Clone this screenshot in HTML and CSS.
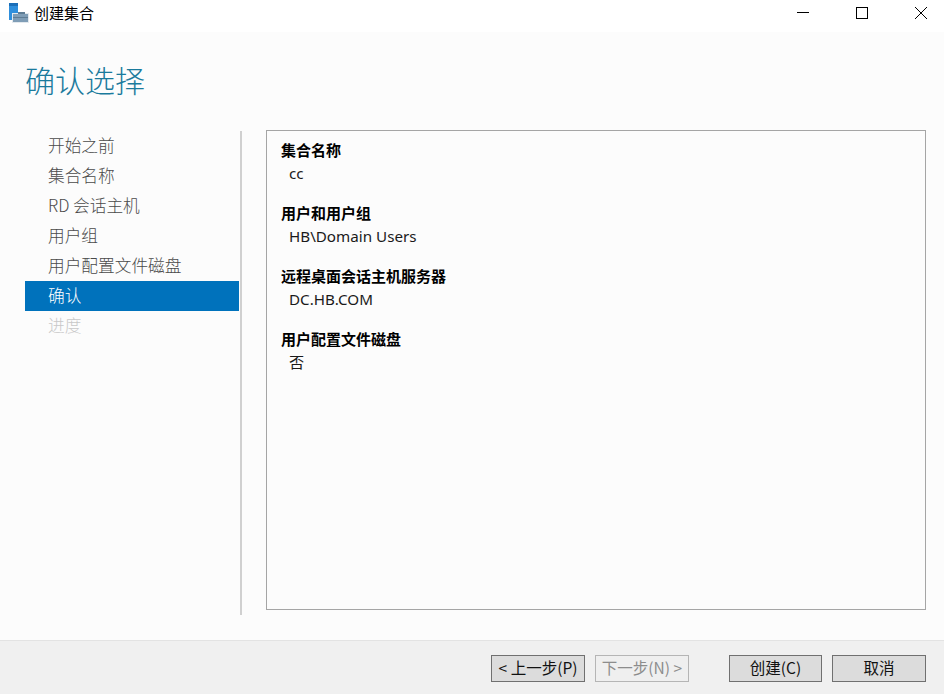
FILE: index.html
```html
<!DOCTYPE html>
<html lang="zh-CN">
<head>
<meta charset="utf-8">
<title>创建集合</title>
<link rel="stylesheet" href="styles.css">
</head>
<body>
<div class="window">
  <header class="titlebar">
    <svg class="app-icon" width="20" height="20" viewBox="0 0 20 20">
      <rect x="0" y="0" width="9" height="17" fill="#2f8fdc"/>
      <rect x="0" y="0" width="9" height="3" fill="#1c6fb8"/>
      <rect x="3" y="10" width="17" height="10" fill="#e3e9ee"/>
      <rect x="4" y="11" width="15" height="8" fill="#7f9db6"/>
      <rect x="9" y="9" width="7" height="2" fill="#5e7c94"/>
      <rect x="4" y="14" width="15" height="1" fill="#5e7c94"/>
    </svg>
    <span class="title-text">创建集合</span>
    <div class="controls">
      <svg class="ctl" width="46" height="26" viewBox="0 0 46 26"><path d="M17 12.500H29" stroke="#000" fill="none"/></svg>
      <svg class="ctl" width="46" height="26" viewBox="0 0 46 26"><rect x="17.500" y="7.500" width="11" height="11" stroke="#000" fill="none"/></svg>
      <svg class="ctl" width="46" height="26" viewBox="0 0 46 26"><path d="M17 7L29 19M29 7L17 19" stroke="#000" fill="none"/></svg>
    </div>
  </header>
  <main class="content">
    <h1 class="page-title">确认选择</h1>
    <div class="columns">
      <nav class="nav">
        <div class="nav-item">开始之前</div>
        <div class="nav-item">集合名称</div>
        <div class="nav-item">RD 会话主机</div>
        <div class="nav-item">用户组</div>
        <div class="nav-item">用户配置文件磁盘</div>
        <div class="nav-item active">确认</div>
        <div class="nav-item disabled">进度</div>
      </nav>
      <section class="panel">
        <div class="group"><div class="label">集合名称</div><div class="value">cc</div></div>
        <div class="group"><div class="label">用户和用户组</div><div class="value">HB\Domain Users</div></div>
        <div class="group"><div class="label">远程桌面会话主机服务器</div><div class="value">DC.HB.COM</div></div>
        <div class="group"><div class="label">用户配置文件磁盘</div><div class="value">否</div></div>
      </section>
    </div>
  </main>
  <footer class="footer">
    <button class="btn">&lt; 上一步(P)</button>
    <button class="btn disabled-btn">下一步(N) &gt;</button>
    <button class="btn primary">创建(C)</button>
    <button class="btn">取消</button>
  </footer>
</div>
</body>
</html>
```
FILE: styles.css
```css
* { box-sizing: border-box; }
html, body { margin: 0; padding: 0; }
body {
  width: 944px;
  height: 694px;
  overflow: hidden;
  font-family: "Noto Sans CJK SC", "Noto Sans", sans-serif;
  color: #000;
  background: #fff;
}
.window { display: flex; flex-direction: column; height: 694px; }
.titlebar {
  height: 32px;
  flex: none;
  display: flex;
  align-items: flex-start;
  background: #fff;
  padding: 3px 0 0 9px;
}
.app-icon { flex: none; }
.title-text { font-size: 15px; line-height: 20px; margin-left: 5px; }
.controls { margin-left: auto; display: flex; margin-top: -3px; }
.ctl { display: block; }
.ctl + .ctl { margin-left: 13px; }
.content {
  flex: 1;
  background: #fcfcfc;
  padding: 0 18px 0 25px;
  display: flex;
  flex-direction: column;
}
.page-title {
  margin: 0;
  padding-top: 28px;
  height: 99px;
  font-size: 30px;
  line-height: 38px;
  font-weight: 300;
  color: #1a7a9c;
}
.columns { display: flex; height: 484px; }
.nav {
  width: 217px;
  flex: none;
  border-right: 2px solid #d0d0d0;
  margin-right: 24px;
  padding-right: 1px;
}
.nav-item {
  height: 30px;
  line-height: 28px;
  padding-left: 23px;
  font-size: 16.700px;
  font-weight: 300;
  color: #4a4a4a;
}
.nav-item.active { background: #0072bc; color: #fff; }
.nav-item.disabled { color: #c8c8c8; }
.panel {
  width: 660px;
  height: 480px;
  margin-top: -1px;
  border: 1px solid #a5a5a5;
  background: #fcfcfc;
  padding: 8px 14px;
}
.group { height: 63px; }
.label { font-size: 15px; font-weight: 700; line-height: 22px; margin-bottom: 1px; }
.value {
  font-size: 15.200px;
  line-height: 23px;
  padding-left: 8px;
  font-family: "Noto Sans", "Noto Sans CJK SC", sans-serif;
  color: #1a1a1a;
}
.footer {
  height: 54px;
  flex: none;
  background: #f0f0f0;
  border-top: 1px solid #e3e3e3;
  display: flex;
  align-items: flex-start;
  padding: 14px 18px 0 491px;
}
.btn {
  width: 94px;
  height: 27px;
  padding: 0 0 3px;
  margin-right: 10px;
  border: 1px solid #707070;
  background: #dcdcdc;
  font-family: inherit;
  font-size: 15.500px;
  font-weight: 400;
  line-height: 20px;
  color: #111;
}
.btn.disabled-btn {
  border-color: #b5b5b5;
  background: #efefef;
  color: #8c8c8c;
  margin-right: 40px;
}
.btn.primary { width: 93px; }
.btn:last-child { margin-right: 0; }
```
